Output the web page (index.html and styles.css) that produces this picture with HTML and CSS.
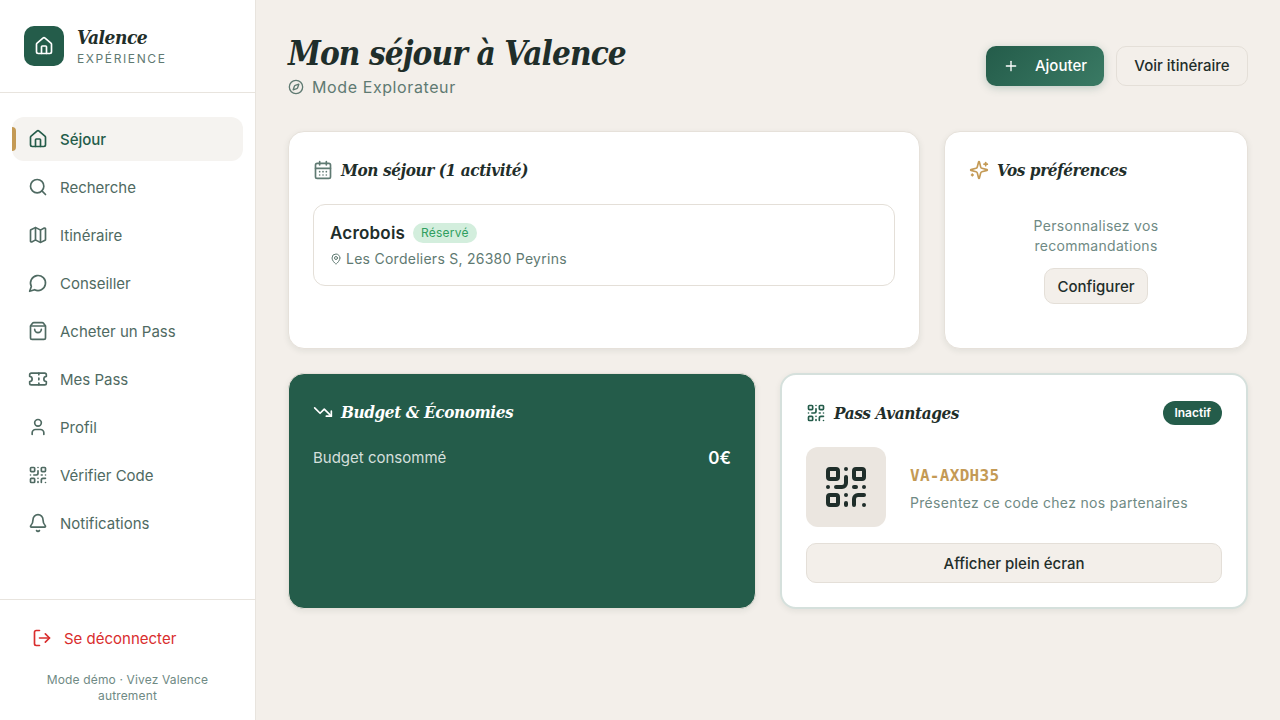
FILE: index.html
```html
<!DOCTYPE html>
<html lang="fr">
<head>
  <meta charset="UTF-8">
  <meta name="viewport" content="width=device-width, initial-scale=1.0">
  <title>Mon séjour à Valence</title>
  <link rel="stylesheet" href="styles.css">
</head>
<body>
  <svg class="sprite" xmlns="http://www.w3.org/2000/svg">
    <symbol id="i-house" viewBox="0 0 24 24"><path d="M15 21v-8a1 1 0 0 0-1-1h-4a1 1 0 0 0-1 1v8"/><path d="M3 10a2 2 0 0 1 .709-1.528l7-5.999a2 2 0 0 1 2.582 0l7 5.999A2 2 0 0 1 21 10v9a2 2 0 0 1-2 2H5a2 2 0 0 1-2-2z"/></symbol>
    <symbol id="i-search" viewBox="0 0 24 24"><circle cx="11" cy="11" r="8"/><path d="m21 21-4.3-4.3"/></symbol>
    <symbol id="i-map" viewBox="0 0 24 24"><path d="M14.106 5.553a2 2 0 0 0 1.788 0l3.659-1.83A1 1 0 0 1 21 4.619v12.764a1 1 0 0 1-.553.894l-4.553 2.277a2 2 0 0 1-1.788 0l-4.212-2.106a2 2 0 0 0-1.788 0l-3.659 1.83A1 1 0 0 1 3 19.381V6.618a1 1 0 0 1 .553-.894l4.553-2.277a2 2 0 0 1 1.788 0z"/><path d="M15 5.764v15"/><path d="M9 3.236v15"/></symbol>
    <symbol id="i-message" viewBox="0 0 24 24"><path d="M7.9 20A9 9 0 1 0 4 16.1L2 22Z"/></symbol>
    <symbol id="i-bag" viewBox="0 0 24 24"><path d="M16 10a4 4 0 0 1-8 0"/><path d="M3.103 6.034h17.794"/><path d="M3.4 5.467a2 2 0 0 0-.4 1.2V20a2 2 0 0 0 2 2h14a2 2 0 0 0 2-2V6.667a2 2 0 0 0-.4-1.2l-2-2.667A2 2 0 0 0 17 2H7a2 2 0 0 0-1.6.8z"/></symbol>
    <symbol id="i-ticket" viewBox="0 0 24 24"><path d="M2 9a3 3 0 0 1 0 6v2a2 2 0 0 0 2 2h16a2 2 0 0 0 2-2v-2a3 3 0 0 1 0-6V7a2 2 0 0 0-2-2H4a2 2 0 0 0-2 2Z"/><path d="M13 5v2"/><path d="M13 17v2"/><path d="M13 11v2"/></symbol>
    <symbol id="i-user" viewBox="0 0 24 24"><path d="M19 21v-2a4 4 0 0 0-4-4H9a4 4 0 0 0-4 4v2"/><circle cx="12" cy="7" r="4"/></symbol>
    <symbol id="i-qr" viewBox="0 0 24 24"><rect width="5" height="5" x="3" y="3" rx="1"/><rect width="5" height="5" x="16" y="3" rx="1"/><rect width="5" height="5" x="3" y="16" rx="1"/><path d="M21 16h-3a2 2 0 0 0-2 2v3"/><path d="M21 21v.01"/><path d="M12 7v3a2 2 0 0 1-2 2H7"/><path d="M3 12h.01"/><path d="M12 3h.01"/><path d="M12 16v.01"/><path d="M16 12h1"/><path d="M21 12v.01"/><path d="M12 21v-1"/></symbol>
    <symbol id="i-bell" viewBox="0 0 24 24"><path d="M10.268 21a2 2 0 0 0 3.464 0"/><path d="M3.262 15.326A1 1 0 0 0 4 17h16a1 1 0 0 0 .74-1.673C19.41 13.956 18 12.499 18 8A6 6 0 0 0 6 8c0 4.499-1.411 5.956-2.738 7.326"/></symbol>
    <symbol id="i-logout" viewBox="0 0 24 24"><path d="m16 17 5-5-5-5"/><path d="M21 12H9"/><path d="M9 21H5a2 2 0 0 1-2-2V5a2 2 0 0 1 2-2h4"/></symbol>
    <symbol id="i-compass" viewBox="0 0 24 24"><circle cx="12" cy="12" r="10"/><path d="m16.24 7.76-1.804 5.411a2 2 0 0 1-1.265 1.265L7.76 16.24l1.804-5.411a2 2 0 0 1 1.265-1.265z"/></symbol>
    <symbol id="i-calendar" viewBox="0 0 24 24"><path d="M8 2v4"/><path d="M16 2v4"/><rect width="18" height="18" x="3" y="4" rx="2"/><path d="M3 10h18"/><path d="M8 14h.01"/><path d="M12 14h.01"/><path d="M16 14h.01"/><path d="M8 18h.01"/><path d="M12 18h.01"/><path d="M16 18h.01"/></symbol>
    <symbol id="i-pin" viewBox="0 0 24 24"><path d="M20 10c0 4.993-5.539 10.193-7.399 11.799a1 1 0 0 1-1.202 0C9.539 20.193 4 14.993 4 10a8 8 0 0 1 16 0"/><circle cx="12" cy="10" r="3"/></symbol>
    <symbol id="i-sparkles" viewBox="0 0 24 24"><path d="M9.937 15.5A2 2 0 0 0 8.5 14.063l-6.135-1.582a.5.5 0 0 1 0-.962L8.5 9.936A2 2 0 0 0 9.937 8.5l1.582-6.135a.5.5 0 0 1 .963 0L14.063 8.5A2 2 0 0 0 15.5 9.937l6.135 1.581a.5.5 0 0 1 0 .964L15.5 14.063a2 2 0 0 0-1.437 1.437l-1.582 6.135a.5.5 0 0 1-.963 0z"/><path d="M20 3v4"/><path d="M22 5h-4"/><path d="M4 17v2"/><path d="M5 18H3"/></symbol>
    <symbol id="i-trending" viewBox="0 0 24 24"><path d="M16 17h6v-6"/><path d="m22 17-8.5-8.5-5 5L2 7"/></symbol>
    <symbol id="i-plus" viewBox="0 0 24 24"><path d="M5 12h14"/><path d="M12 5v14"/></symbol>
  </svg>

  <div class="app">
    <aside class="sidebar">
      <div class="brand">
        <div class="brand__logo"><svg class="icon icon--20"><use href="#i-house"/></svg></div>
        <div>
          <div class="brand__name">Valence</div>
          <div class="brand__sub">EXPÉRIENCE</div>
        </div>
      </div>
      <nav class="nav">
        <a class="nav__item nav__item--active"><svg class="icon icon--20"><use href="#i-house"/></svg>Séjour</a>
        <a class="nav__item"><svg class="icon icon--20"><use href="#i-search"/></svg>Recherche</a>
        <a class="nav__item"><svg class="icon icon--20"><use href="#i-map"/></svg>Itinéraire</a>
        <a class="nav__item"><svg class="icon icon--20"><use href="#i-message"/></svg>Conseiller</a>
        <a class="nav__item"><svg class="icon icon--20"><use href="#i-bag"/></svg>Acheter un Pass</a>
        <a class="nav__item"><svg class="icon icon--20"><use href="#i-ticket"/></svg>Mes Pass</a>
        <a class="nav__item"><svg class="icon icon--20"><use href="#i-user"/></svg>Profil</a>
        <a class="nav__item"><svg class="icon icon--20"><use href="#i-qr"/></svg>Vérifier Code</a>
        <a class="nav__item"><svg class="icon icon--20"><use href="#i-bell"/></svg>Notifications</a>
      </nav>
      <div class="sidebar__foot">
        <a class="logout"><svg class="icon icon--20"><use href="#i-logout"/></svg>Se déconnecter</a>
        <p class="demo">Mode démo · Vivez Valence autrement</p>
      </div>
    </aside>

    <main class="main">
      <header class="top">
        <div>
          <h1 class="top__title">Mon séjour à Valence</h1>
          <div class="top__mode"><svg class="icon icon--16"><use href="#i-compass"/></svg>Mode Explorateur</div>
        </div>
        <div class="top__actions">
          <button class="btn btn--primary"><svg class="icon icon--16"><use href="#i-plus"/></svg>Ajouter</button>
          <button class="btn btn--light">Voir itinéraire</button>
        </div>
      </header>

      <section class="row row--thirds">
        <div class="card">
          <h2 class="card__title"><svg class="icon icon--20 icon--muted"><use href="#i-calendar"/></svg>Mon séjour (1 activité)</h2>
          <div class="stay">
            <div class="stay__head">
              <span class="stay__name">Acrobois</span>
              <span class="tag">Réservé</span>
            </div>
            <div class="stay__addr"><svg class="icon icon--12"><use href="#i-pin"/></svg>Les Cordeliers S, 26380 Peyrins</div>
          </div>
        </div>
        <div class="card">
          <h2 class="card__title"><svg class="icon icon--20 icon--gold"><use href="#i-sparkles"/></svg>Vos préférences</h2>
          <div class="prefs">
            <p class="prefs__text">Personnalisez vos recommandations</p>
            <button class="btn btn--small">Configurer</button>
          </div>
        </div>
      </section>

      <section class="row row--half">
        <div class="card card--green">
          <h2 class="card__title"><svg class="icon icon--20"><use href="#i-trending"/></svg>Budget &amp; Économies</h2>
          <div class="budget">
            <span class="budget__label">Budget consommé</span>
            <span class="budget__value">0€</span>
          </div>
        </div>
        <div class="card card--pass">
          <div class="pass__head">
            <h2 class="card__title card__title--flat"><svg class="icon icon--20 icon--green"><use href="#i-qr"/></svg>Pass Avantages</h2>
            <span class="badge">Inactif</span>
          </div>
          <div class="pass__body">
            <div class="pass__qr"><svg class="icon icon--48"><use href="#i-qr"/></svg></div>
            <div class="pass__info">
              <div class="pass__code">VA-AXDH35</div>
              <div class="pass__hint">Présentez ce code chez nos partenaires</div>
            </div>
          </div>
          <button class="btn btn--wide">Afficher plein écran</button>
        </div>
      </section>
    </main>
  </div>
</body>
</html>
```

FILE: styles.css
```css
* {
  box-sizing: border-box;
}
body {
  margin: 0;
  font-family: Inter, "Noto Sans", sans-serif;
  color: #1f2e2a;
  background: #f3efea;
}
.sprite {
  display: none;
}
.icon {
  flex: none;
  fill: none;
  stroke: currentColor;
  stroke-width: 2;
  stroke-linecap: round;
  stroke-linejoin: round;
}
.icon--12 { width: 12px; height: 12px; }
.icon--16 { width: 16px; height: 16px; }
.icon--20 { width: 20px; height: 20px; }
.icon--48 { width: 48px; height: 48px; }
.icon--muted { color: #5f7a72; }
.icon--gold { color: #c49a55; }
.icon--green { color: #245c4a; }

.app {
  display: flex;
  height: 720px;
}
.sidebar {
  width: 256px;
  flex: none;
  display: flex;
  flex-direction: column;
  background: #fff;
  border-right: 1px solid #e8e4de;
}
.brand {
  height: 93px;
  display: flex;
  align-items: center;
  gap: 13px;
  padding: 0 24px;
  border-bottom: 1px solid #e8e4de;
}
.brand__logo {
  width: 40px;
  height: 40px;
  display: flex;
  align-items: center;
  justify-content: center;
  border-radius: 10px;
  color: #fff;
  background: #245c4a;
}
.brand__name {
  font: italic 700 19px/24px "DejaVu Serif", serif;
  font-stretch: condensed;
  letter-spacing: -0.5px;
  color: #1f2e2a;
}
.brand__sub {
  margin-top: 2px;
  font-size: 12px;
  line-height: 16px;
  letter-spacing: 1.6px;
  color: #5f7a72;
}
.nav {
  flex: 1;
  display: flex;
  flex-direction: column;
  gap: 4px;
  padding: 24px 12px;
}
.nav__item {
  position: relative;
  height: 44px;
  display: flex;
  align-items: center;
  gap: 12px;
  padding: 0 16px;
  border-radius: 12px;
  font-size: 15px;
  color: #4f6a62;
}
.nav__item--active {
  color: #245c4a;
  font-weight: 500;
  background: #f5f3f0;
}
.nav__item--active::before {
  content: "";
  position: absolute;
  left: 0;
  top: 10px;
  bottom: 10px;
  width: 4px;
  border-radius: 0 4px 4px 0;
  background: #c49a55;
}
.sidebar__foot {
  height: 121px;
  padding: 16px 16px 0;
  border-top: 1px solid #e8e4de;
}
.logout {
  height: 44px;
  display: flex;
  align-items: center;
  gap: 12px;
  padding: 0 16px;
  font-size: 15px;
  color: #d92d2d;
}
.demo {
  margin: 12px 8px 0;
  text-align: center;
  font-size: 12px;
  line-height: 16px;
  letter-spacing: 0.15px;
  color: #6f8a84;
}

.main {
  flex: 1;
  padding: 32px;
}
.top {
  display: flex;
  justify-content: space-between;
  align-items: center;
  margin-bottom: 32px;
}
.top__title {
  margin: 0;
  font: italic 700 33px/43px "DejaVu Serif", serif;
  font-stretch: condensed;
  letter-spacing: -0.9px;
  color: #1f2e2a;
}
.top__mode {
  display: flex;
  align-items: center;
  gap: 8px;
  font-size: 16px;
  line-height: 24px;
  letter-spacing: 0.6px;
  color: #5f7a72;
}
.top__actions {
  display: flex;
  gap: 12px;
}
.btn {
  font-family: inherit;
  font-size: 15px;
  font-weight: 500;
  color: #1f2e2a;
  border: 1px solid #e4dfd8;
  background: #f3efea;
  cursor: pointer;
}
.btn--primary {
  width: 118px;
  height: 40px;
  display: flex;
  align-items: center;
  justify-content: center;
  gap: 16px;
  border: none;
  border-radius: 10px;
  color: #fff;
  background: linear-gradient(135deg, #245c4a, #3a7a64);
  box-shadow: 0 2px 8px rgba(36, 92, 74, 0.25);
}
.btn--light {
  width: 132px;
  height: 40px;
  border-radius: 10px;
}
.btn--small {
  width: 104px;
  height: 36px;
  border-radius: 10px;
}
.btn--wide {
  width: 100%;
  height: 40px;
  border-radius: 10px;
}

.row {
  display: grid;
  gap: 24px;
  margin-bottom: 24px;
}
.row--thirds {
  grid-template-columns: 632px 304px;
  height: 218px;
}
.row--half {
  grid-template-columns: 1fr 1fr;
  height: 235px;
}
.card {
  padding: 24px;
  border: 1px solid #e6e1da;
  border-radius: 16px;
  background: #fff;
  box-shadow: 0 2px 6px rgba(31, 46, 42, 0.08);
}
.card--green {
  color: #fff;
  background: #245c4a;
}
.card--pass {
  border: 2px solid #d5e0dc;
}
.card__title {
  display: flex;
  align-items: center;
  gap: 8px;
  height: 28px;
  margin: 0 0 20px;
  font: italic 700 17px/28px "DejaVu Serif", serif;
  font-stretch: condensed;
  letter-spacing: -0.4px;
}
.card__title--flat {
  margin: 0;
}
.stay {
  height: 82px;
  padding: 16px;
  border: 1px solid #e4dfd8;
  border-radius: 12px;
}
.stay__head {
  display: flex;
  align-items: center;
  gap: 8px;
  height: 24px;
}
.stay__name {
  font-size: 17px;
  font-weight: 600;
  letter-spacing: 0.2px;
}
.tag {
  padding: 2px 8px;
  border-radius: 10px;
  font-size: 12px;
  line-height: 16px;
  letter-spacing: 0.2px;
  color: #2f9e5f;
  background: #d3eedd;
}
.stay__addr {
  display: flex;
  align-items: center;
  gap: 4px;
  margin-top: 4px;
  font-size: 14px;
  line-height: 20px;
  letter-spacing: 0.26px;
  color: #5f7a72;
}
.prefs {
  display: flex;
  flex-direction: column;
  align-items: center;
  padding-top: 12px;
}
.prefs__text {
  width: 180px;
  margin: 0 0 12px;
  text-align: center;
  font-size: 14px;
  line-height: 20px;
  letter-spacing: 0.3px;
  color: #6f8a84;
}
.budget {
  display: flex;
  justify-content: space-between;
  align-items: center;
  line-height: 24px;
}
.budget__label {
  font-size: 15px;
  color: rgba(255, 255, 255, 0.82);
}
.budget__value {
  font-size: 17px;
  font-weight: 600;
}
.pass__head {
  display: flex;
  justify-content: space-between;
  align-items: center;
  margin-bottom: 20px;
}
.badge {
  padding: 4px 11px;
  border-radius: 12px;
  font-size: 12px;
  font-weight: 600;
  line-height: 16px;
  color: #fff;
  background: #245c4a;
}
.pass__body {
  display: flex;
  align-items: center;
  gap: 24px;
  margin-bottom: 16px;
}
.pass__qr {
  width: 80px;
  height: 80px;
  display: flex;
  align-items: center;
  justify-content: center;
  border-radius: 12px;
  color: #1f2e2a;
  background: #ebe6e0;
}
.pass__info {
  padding-top: 3px;
}
.pass__code {
  font: 700 16px/24px "DejaVu Sans Mono", monospace;
  letter-spacing: 0.3px;
  color: #c49a55;
}
.pass__hint {
  margin-top: 5px;
  font-size: 14px;
  line-height: 20px;
  letter-spacing: 0.32px;
  color: #6f8a84;
}
```
